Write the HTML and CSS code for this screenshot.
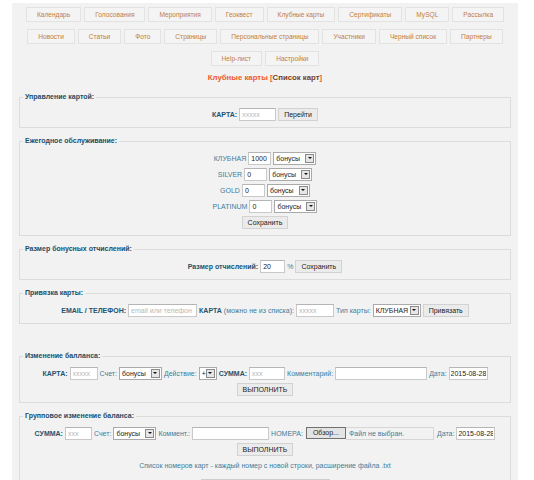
FILE: index.html
```
<!DOCTYPE html>
<html lang="ru">
<head>
    <meta charset="UTF-8">
    <title>Клубные карты</title>
    <link rel="stylesheet" href="styles.css">
</head>
<body>
    <div class="page">
        <div class="nav">
            <div class="nav-row">
                <a class="tab">Календарь</a>
                <a class="tab">Голосования</a>
                <a class="tab">Мероприятия</a>
                <a class="tab">Геоквест</a>
                <a class="tab">Клубные карты</a>
                <a class="tab">Сертификаты</a>
                <a class="tab">MySQL</a>
                <a class="tab">Рассылка</a>
            </div>
            <div class="nav-row">
                <a class="tab">Новости</a>
                <a class="tab">Статьи</a>
                <a class="tab">Фото</a>
                <a class="tab">Страницы</a>
                <a class="tab">Персональные страницы</a>
                <a class="tab">Участники</a>
                <a class="tab">Черный список</a>
                <a class="tab">Партнеры</a>
            </div>
            <div class="nav-row">
                <a class="tab">Help-лист</a>
                <a class="tab">Настройки</a>
            </div>
        </div>

        <h1 class="title">Клубные карты [<span class="title-sub">Список карт</span>]</h1>

        <!-- управление картой -->
        <fieldset class="box">
            <legend>Управление картой:</legend>
            <div class="row">
                <b class="lbl">КАРТА:</b>
                <input class="inp w-37" placeholder="xxxxx">
                <button class="btn">Перейти</button>
            </div>
        </fieldset>

        <!-- ежегодное обслуживание -->
        <fieldset class="box">
            <legend>Ежегодное обслуживание:</legend>
            <div class="row">
                <span class="txt">КЛУБНАЯ</span>
                <input class="inp inp-dark w-23" value="1000">
                <span class="sel w-43"><span class="sel-text">бонусы</span><span class="sel-arrow"></span></span>
            </div>
            <div class="row">
                <span class="txt">SILVER</span>
                <input class="inp inp-dark w-23" value="0">
                <span class="sel w-43"><span class="sel-text">бонусы</span><span class="sel-arrow"></span></span>
            </div>
            <div class="row">
                <span class="txt">GOLD</span>
                <input class="inp inp-dark w-23" value="0">
                <span class="sel w-43"><span class="sel-text">бонусы</span><span class="sel-arrow"></span></span>
            </div>
            <div class="row">
                <span class="txt">PLATINUM</span>
                <input class="inp inp-dark w-23" value="0">
                <span class="sel w-43"><span class="sel-text">бонусы</span><span class="sel-arrow"></span></span>
            </div>
            <div class="row">
                <button class="btn">Сохранить</button>
            </div>
        </fieldset>

        <!-- бонусные отчисления -->
        <fieldset class="box">
            <legend>Размер бонусных отчислений:</legend>
            <div class="row">
                <b class="lbl">Размер отчислений:</b>
                <input class="inp inp-dark w-25" value="20">
                <span class="txt">%</span>
                <button class="btn">Сохранить</button>
            </div>
        </fieldset>

        <!-- привязка -->
        <fieldset class="box">
            <legend>Привязка карты:</legend>
            <div class="row">
                <b class="lbl">EMAIL / ТЕЛЕФОН:</b>
                <input class="inp w-69" placeholder="email или телефон">
                <span class="txt"><b class="lbl">КАРТА</b> (можно не из списка):</span>
                <input class="inp w-38" placeholder="xxxxx">
                <span class="txt">Тип карты:</span>
                <span class="sel w-48"><span class="sel-text">КЛУБНАЯ</span><span class="sel-arrow"></span></span>
                <button class="btn">Привязать</button>
            </div>
        </fieldset>

        <div class="spacer"></div>

        <!-- изменение баланса -->
        <fieldset class="box">
            <legend>Изменение балланса:</legend>
            <div class="row">
                <b class="lbl">КАРТА:</b>
                <input class="inp w-28" placeholder="xxxxx">
                <span class="txt">Счет:</span>
                <span class="sel w-43"><span class="sel-text">бонусы</span><span class="sel-arrow"></span></span>
                <span class="txt">Действие:</span>
                <span class="sel w-18"><span class="sel-text">+</span><span class="sel-arrow"></span></span>
                <b class="lbl">СУММА:</b>
                <input class="inp w-36" placeholder="xxx">
                <span class="txt">Комментарий:</span>
                <input class="inp w-92">
                <span class="txt">Дата:</span>
                <input class="inp inp-dark w-39" value="2015-08-28">
            </div>
            <div class="row">
                <button class="btn">ВЫПОЛНИТЬ</button>
            </div>
        </fieldset>

        <!-- групповое изменение -->
        <fieldset class="box">
            <legend>Групповое изменение баланса:</legend>
            <div class="row">
                <b class="lbl">СУММА:</b>
                <input class="inp w-27" placeholder="xxx">
                <span class="txt">Счет:</span>
                <span class="sel w-43"><span class="sel-text">бонусы</span><span class="sel-arrow"></span></span>
                <span class="txt">Коммент.:</span>
                <input class="inp w-77">
                <span class="txt">НОМЕРА:</span>
                <span class="file"><span class="file-btn">Обзор...</span><span class="file-name">Файл не выбран.</span></span>
                <span class="txt">Дата:</span>
                <input class="inp inp-dark w-39" value="2015-08-28">
            </div>
            <div class="row">
                <button class="btn">ВЫПОЛНИТЬ</button>
            </div>
            <div class="row">
                <span class="txt">Список номеров карт - каждый номер с новой строки, расширение файла .txt</span>
            </div>
            <div class="row">
                <span class="area"></span>
            </div>
        </fieldset>
    </div>
</body>
</html>
```

FILE: styles.css
```
body {
    margin: 0;
    background-color: #fff;
    font-family: "Liberation Sans", Arial, sans-serif;
    font-size: 7px;
    color: #333;
}

.page {
    width: 506px;
    margin: 3px 0 0 12px;
    padding: 4px 0 10px;
    background-color: #f2f2f2;
    min-height: 480px;
    box-sizing: border-box;
}

/* top menu */
.nav-row {
    display: flex;
    justify-content: center;
    gap: 3px;
    margin-bottom: 7px;
}

.tab {
    display: block;
    height: 15px;
    line-height: 13px;
    padding: 0 10px;
    border: 1px solid #e2e2e2;
    background-color: #f4f4f4;
    box-sizing: border-box;
    font-size: 6.6px;
    color: #c27e3e;
    white-space: nowrap;
}

.title {
    margin: 0 0 9px;
    font-size: 7.8px;
    line-height: 10px;
    text-align: center;
    color: #f0592a;
}

.title-sub {
    color: #7a3d14;
}

/* blocks */
.box {
    margin: 0 7px 8px;
    padding: 4px 3px 5px;
    border: 1px solid #dcdcdc;
    min-width: 0;
}

.box legend {
    padding: 0 2px;
    font-weight: bold;
    line-height: 10px;
    color: #1d4c66;
}

.row {
    display: flex;
    justify-content: center;
    align-items: center;
    gap: 2px;
    height: 16px;
    white-space: nowrap;
}

.lbl {
    color: #23536e;
}

.txt {
    color: #3f7d9c;
}

.inp {
    height: 13px;
    padding: 0 2px;
    border: 1px solid #c9c9c9;
    border-top-color: #b5b5b5;
    background-color: #fff;
    box-sizing: border-box;
    font-family: inherit;
    font-size: 7px;
    color: #aaa;
    outline: none;
}

.inp::placeholder {
    color: #b8b8b8;
}

.inp-dark {
    color: #222;
}

.w-18 { width: 18px; }
.w-23 { width: 23px; }
.w-25 { width: 25px; }
.w-27 { width: 27px; }
.w-28 { width: 28px; }
.w-36 { width: 36px; }
.w-37 { width: 37px; }
.w-38 { width: 38px; }
.w-39 { width: 39px; padding: 0 1px; }
.w-43 { width: 43px; }
.w-48 { width: 48px; }
.w-69 { width: 69px; }
.w-77 { width: 77px; }
.w-92 { width: 92px; }

.btn {
    height: 13px;
    padding: 0 5px;
    border: 1px solid #d2d2d2;
    background-color: #ebebeb;
    font-family: inherit;
    font-size: 7px;
    line-height: 11px;
    color: #222;
}

/* fake select */
.sel {
    display: inline-flex;
    align-items: center;
    height: 13px;
    border: 1px solid #aaa;
    background-color: #fff;
    box-sizing: border-box;
    color: #222;
}

.sel-text {
    flex: 1;
    padding-left: 2px;
}

.sel-arrow {
    position: relative;
    flex: none;
    width: 9px;
    height: 9px;
    margin-right: 1px;
    border: 1px solid #8a8a8a;
    background-color: #e6e6e6;
    box-sizing: border-box;
}

.sel-arrow::after {
    content: "";
    position: absolute;
    left: 1.5px;
    top: 2.5px;
    border-top: 2.5px solid #111;
    border-left: 2.5px solid transparent;
    border-right: 2.5px solid transparent;
}

/* file input */
.file {
    display: inline-flex;
    align-items: center;
    margin: 0 1px;
}

.file-btn {
    height: 12px;
    line-height: 10px;
    padding: 0 6px;
    border: 1px solid #707070;
    background-color: #e4e4e4;
    box-sizing: border-box;
    color: #222;
}

.file-name {
    width: 88px;
    height: 13px;
    line-height: 11px;
    padding-left: 3px;
    border: 1px solid #d6d6d6;
    border-left: none;
    box-sizing: border-box;
    color: #3f7d9c;
}

.spacer {
    height: 19px;
}

.area {
    width: 127px;
    height: 13px;
    margin-top: 10px;
    border: 1px solid #cfcfcf;
    background-color: #fff;
}
```
